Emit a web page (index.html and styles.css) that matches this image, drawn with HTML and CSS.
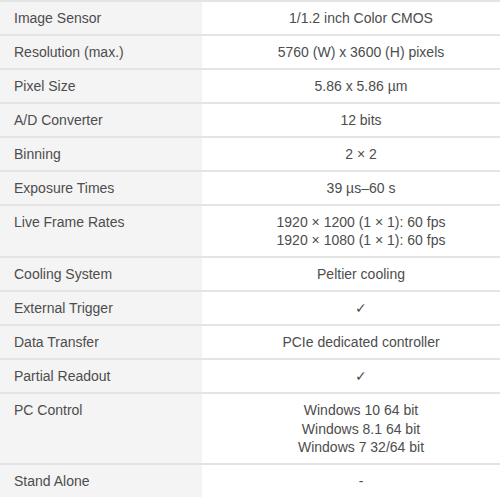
FILE: index.html
```html
<!DOCTYPE html>
<html>
<head>
<meta charset="utf-8">
<link rel="stylesheet" href="styles.css">
</head>
<body>
<table class="specs">
  <tbody>
    <tr><th>Image Sensor</th><td>1/1.2 inch Color CMOS</td></tr>
    <tr><th>Resolution (max.)</th><td>5760 (W) x 3600 (H) pixels</td></tr>
    <tr><th>Pixel Size</th><td>5.86 x 5.86 µm</td></tr>
    <tr><th>A/D Converter</th><td>12 bits</td></tr>
    <tr><th>Binning</th><td>2 × 2</td></tr>
    <tr><th>Exposure Times</th><td>39 µs–60 s</td></tr>
    <tr><th>Live Frame Rates</th><td>1920 × 1200 (1 × 1): 60 fps<br>1920 × 1080 (1 × 1): 60 fps</td></tr>
    <tr><th>Cooling System</th><td>Peltier cooling</td></tr>
    <tr><th>External Trigger</th><td>✓</td></tr>
    <tr><th>Data Transfer</th><td>PCIe dedicated controller</td></tr>
    <tr><th>Partial Readout</th><td>✓</td></tr>
    <tr><th>PC Control</th><td>Windows 10 64 bit<br>Windows 8.1 64 bit<br>Windows 7 32/64 bit</td></tr>
    <tr><th>Stand Alone</th><td>-</td></tr>
  </tbody>
</table>
</body>
</html>
```

FILE: styles.css
```css
html, body {
  margin: 0;
  padding: 0;
  background: #ffffff;
  overflow: hidden;
}
.specs {
  width: 520px;
  border-collapse: collapse;
  font-family: "Liberation Sans", Arial, sans-serif;
  font-size: 14px;
  line-height: 18.4px;
  color: #4d4d4d;
}
.specs th,
.specs td {
  border-top: 2px solid #e4e4e4;
  padding: 7px 0 6.6px 14px;
  vertical-align: top;
  font-weight: normal;
}
.specs th {
  width: 188px;
  text-align: left;
  background: #f4f4f4;
}
.specs td {
  text-align: center;
  padding-left: 0;
}
```
